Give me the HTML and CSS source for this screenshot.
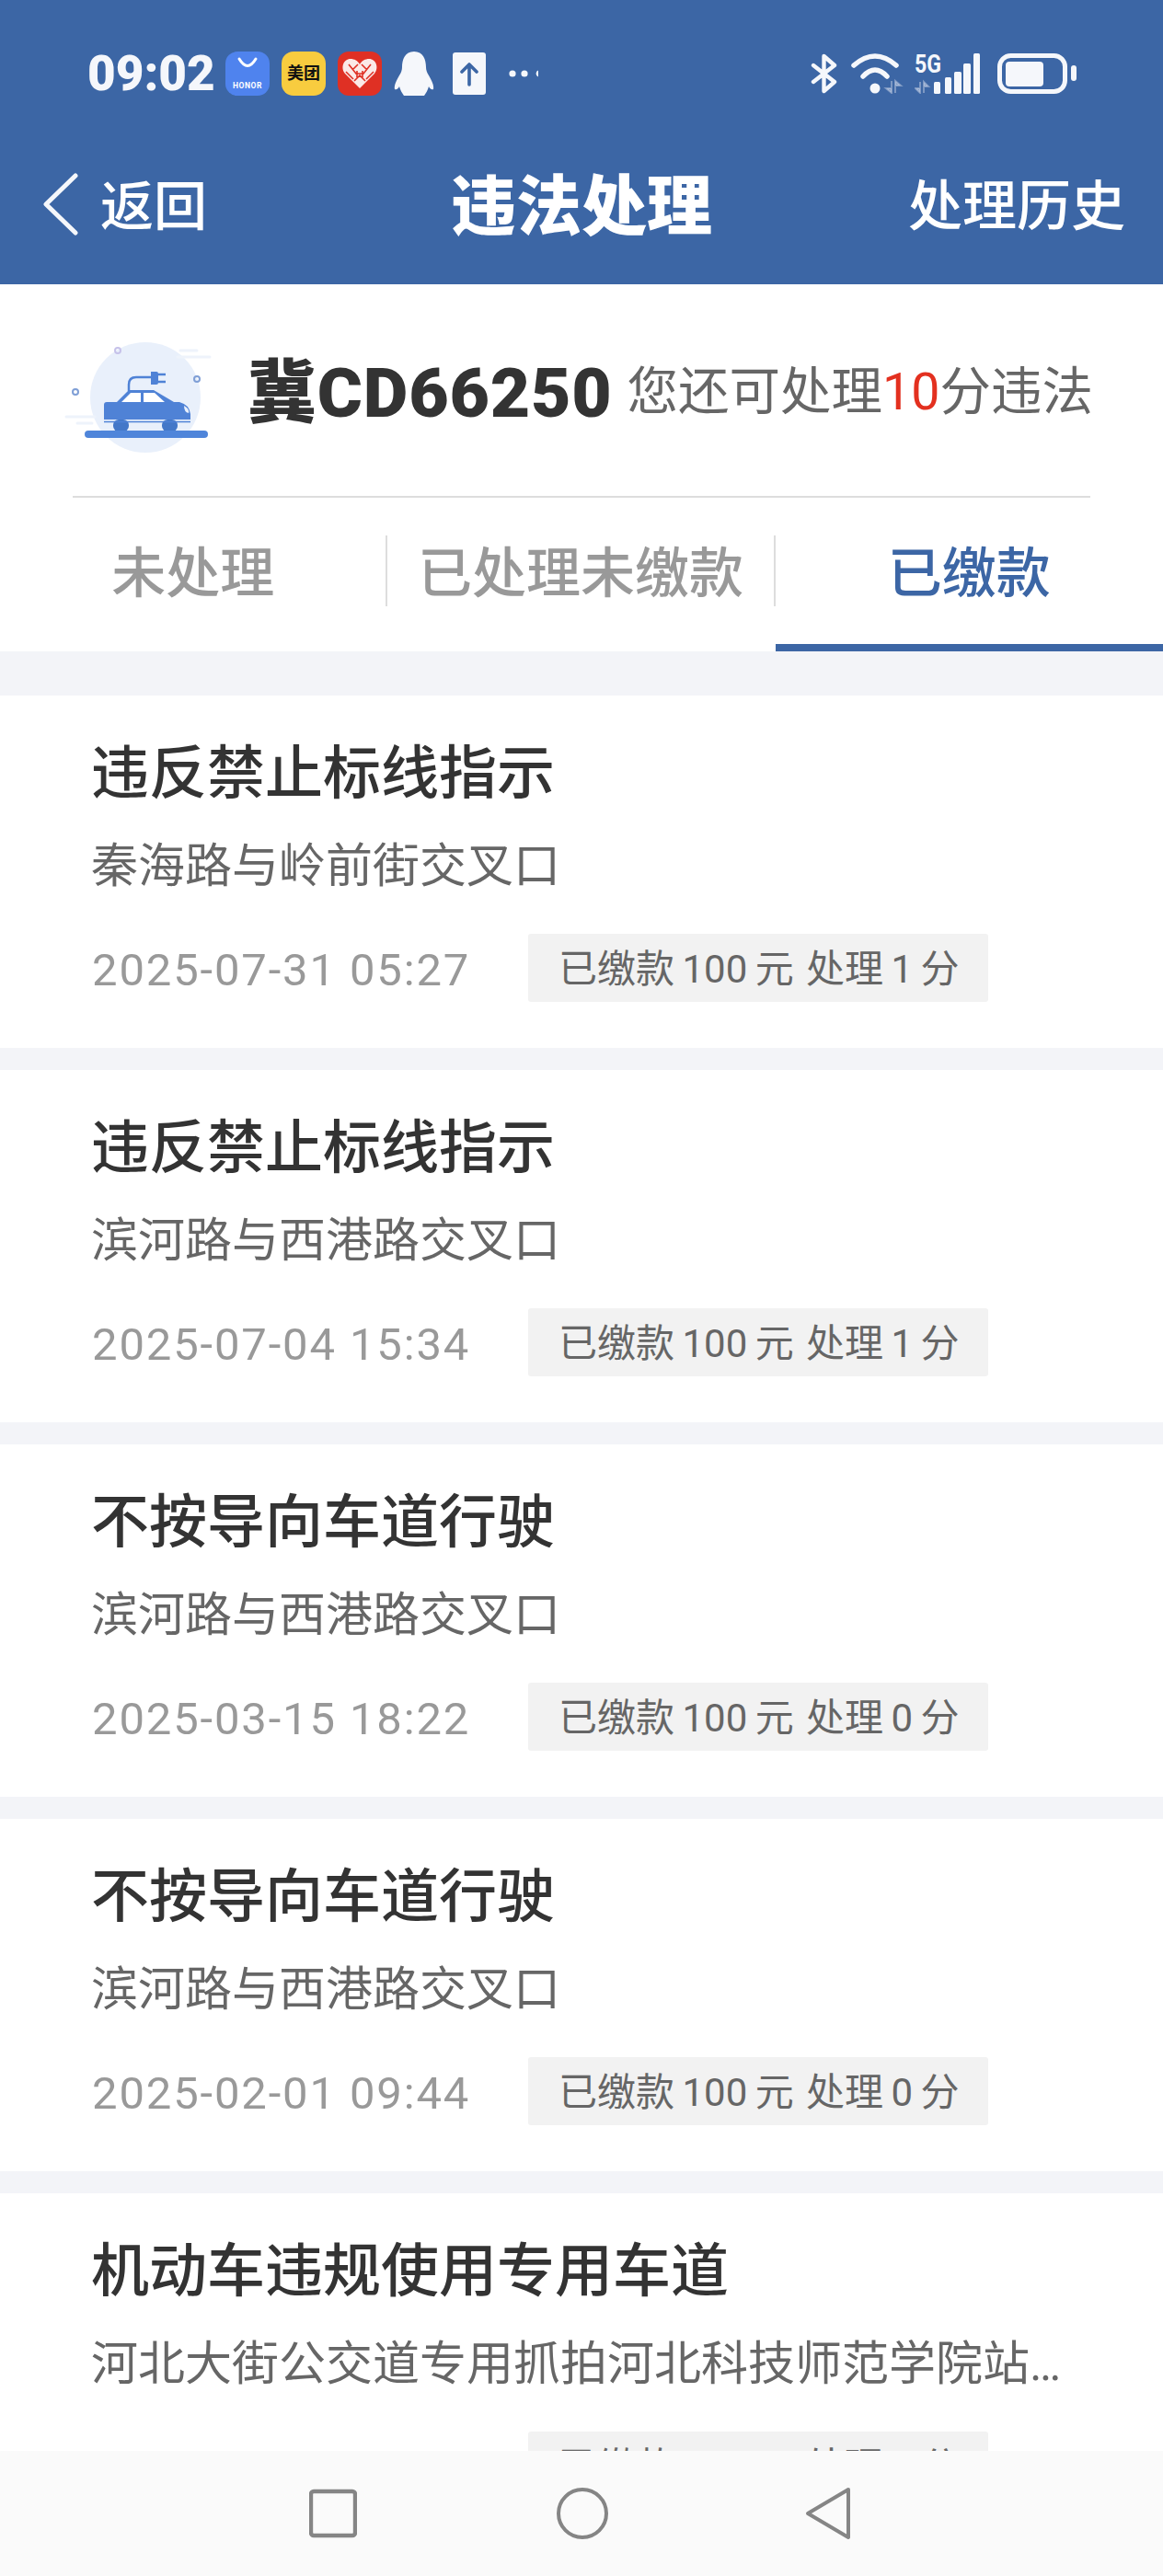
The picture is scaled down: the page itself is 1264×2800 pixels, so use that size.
FILE: index.html
```html
<!DOCTYPE html>
<html lang="zh-CN">
<head>
<meta charset="utf-8">
<title>违法处理</title>
<link rel="stylesheet" href="styles.css">
</head>
<body>
<div class="app">
  <header class="topbar">
    <div class="status">
      <div class="status-left">
        <span class="clock">09:02</span>
        <svg class="ic48" viewBox="0 0 48 48"><rect width="48" height="48" rx="13" fill="#4f83ee"/><path d="M15 8 Q24 23 33 8" fill="none" stroke="#fff" stroke-width="3" stroke-linecap="round"/><text x="24" y="40" text-anchor="middle" class="honor">HONOR</text></svg>
        <span class="meituan">美团</span>
        <svg class="ic48" viewBox="0 0 48 48"><rect width="48" height="48" rx="12" fill="#df3024"/><path d="M24 40 L8 24 C3 18 6 8 14 8 C18 8 22 10 24 14 C26 10 30 8 34 8 C42 8 45 18 40 24 Z" fill="#fbe9e7"/><path d="M12 14 L20 24 M9 22 L17 30 M22 14 L16 20 M36 14 L28 24 M39 22 L31 30 M26 14 L32 20 M18 32 L24 26 L30 32 M21 21 V28 M27 21 V28 M19 24 H29" fill="none" stroke="#df3024" stroke-width="1.6"/></svg>
        <svg class="qq" viewBox="0 0 44 48"><path d="M22 0 C12 0 9 9 9 17 C9 20 8 23 6 26 C3 31 0 37 1 41 C3 42 5 40 6 38 C7 42 9 45 11 48 H33 C35 45 37 42 38 38 C39 40 41 42 43 41 C44 37 41 31 38 26 C36 23 35 20 35 17 C35 9 32 0 22 0 Z" fill="#f5f7fb"/></svg>
        <svg class="upload" viewBox="0 0 36 46"><rect width="36" height="46" rx="3" fill="#f5f7fb"/><path d="M18 35 V13 M10 21 L18 13 L26 21" fill="none" stroke="#3c66a5" stroke-width="3.6" stroke-linecap="round" stroke-linejoin="round"/></svg>
        <svg class="dots" viewBox="0 0 32 10"><circle cx="4" cy="5" r="3.6"/><circle cx="17" cy="5" r="3.6"/><path d="M32 1.6 A3.6 3.6 0 0 0 32 8.4 Z"/></svg>
      </div>
      <div class="status-right">
        <svg class="bt" viewBox="0 0 29 44"><path d="M3 13 L26 31 L14.5 41 V3 L26 13 L3 31" fill="none" stroke="#f5f7fb" stroke-width="4.4" stroke-linejoin="round" stroke-linecap="round"/></svg>
        <svg class="wifi" viewBox="0 0 58 44"><circle cx="27" cy="38" r="5.500" fill="#f5f7fb"/><path d="M4 13 Q27 -7 50 13 M14 25 Q27 11 40 25" fill="none" stroke="#f5f7fb" stroke-width="5.500" stroke-linecap="round"/><path d="M45 30 V43 L39 38 H45 M49 43 V30 L55 35 H49" fill="#f5f7fb" fill-opacity=".35" stroke="#f5f7fb" stroke-opacity=".35" stroke-width="2"/></svg>
        <svg class="net" viewBox="0 0 72 44"><text x="0" y="21" textLength="29" lengthAdjust="spacingAndGlyphs" class="fiveg">5G</text><path d="M6 31 V43 L1 38 H6 M10 43 V31 L15 36 H10" fill="#f5f7fb" fill-opacity=".35" stroke="#f5f7fb" stroke-opacity=".35" stroke-width="2"/><rect x="21" y="31" width="7" height="13" rx="1.5" fill="#f5f7fb"/><rect x="33" y="26" width="7" height="18" rx="1.5" fill="#f5f7fb"/><rect x="43" y="20" width="8" height="24" rx="1.5" fill="#f5f7fb"/><rect x="53" y="11" width="8" height="33" rx="1.5" fill="#f5f7fb"/><rect x="64" y="0" width="7" height="44" rx="1.5" fill="#f5f7fb"/></svg>
        <svg class="batt" viewBox="0 0 88 44"><rect x="3.500" y="2.500" width="71" height="39" rx="12" fill="none" stroke="#f5f7fb" stroke-width="5"/><rect x="10" y="9" width="41" height="27" rx="4" fill="#f5f7fb"/><rect x="81" y="13" width="6" height="17" rx="3" fill="#f5f7fb"/></svg>
      </div>
    </div>
    <nav class="navbar">
      <div class="back">
        <svg class="chev" viewBox="0 0 40 68"><path d="M36 3 L4 34 L36 65" fill="none" stroke="#f5f7fb" stroke-width="5" stroke-linecap="round" stroke-linejoin="round"/></svg>
        <span>返回</span>
      </div>
      <h1 class="page-title">违法处理</h1>
      <div class="history">处理历史</div>
    </nav>
  </header>

  <section class="summary">
    <div class="plate-row">
      <svg class="car" viewBox="60 340 200 160">
        <circle cx="158" cy="432" r="60" fill="#e9f0fb"/>
        <path d="M193 388 H228 M72 453 H103 M196 381 H214 M84 460 H100" stroke="#eef3fb" stroke-width="3" stroke-linecap="round"/>
        <circle cx="128" cy="381" r="3" fill="none" stroke="#c6c2ea" stroke-width="2"/>
        <circle cx="214" cy="412" r="3" fill="none" stroke="#7f9fd6" stroke-width="2"/>
        <circle cx="82" cy="426" r="3" fill="none" stroke="#7f9fd6" stroke-width="2"/>
        <path d="M140 425 V418 Q140 410 148 410 H164" fill="none" stroke="#4f82d6" stroke-width="2.500"/>
        <path d="M164 404 H170 Q172 404 172 406 V416 Q172 418 170 418 H164 Z" fill="#4f82d6"/>
        <path d="M172 407 H180 M172 415 H180" stroke="#4f82d6" stroke-width="2.500"/>
        <rect x="123" y="456" width="17" height="13" rx="6" fill="#4478c8"/>
        <rect x="176" y="456" width="17" height="13" rx="6" fill="#4478c8"/>
        <path d="M127 437 L140 424 H167 L189 437 Z" fill="#4f82d6"/>
        <path d="M132 437 L142 427 H153 V437 Z M156 427 H168 L179 437 H156 Z" fill="#fff"/>
        <path d="M116 437 H195 Q206 440 207 450 V456 H113 V440 Q113 437 116 437 Z" fill="#4f82d6"/>
        <path d="M113 458.500 H207" stroke="#4f82d6" stroke-width="1.500"/>
        <path d="M200 441 Q206 444 205 449 Q200 448 200 441 Z" fill="#e9f0fb"/>
        <rect x="92" y="468" width="134" height="8" rx="4" fill="#4f85da"/>
      </svg>
      <span class="plate">冀CD66250</span>
      <span class="quota">您还可处理<em class="points">10</em>分违法</span>
    </div>
    <div class="tabs">
      <div class="tab"><div class="tab-in">未处理</div></div>
      <div class="tab"><div class="tab-in">已处理未缴款</div></div>
      <div class="tab active"><div class="tab-in">已缴款</div></div>
    </div>
  </section>

  <main class="list">
    <article class="card">
      <h2 class="card-title">违反禁止标线指示</h2>
      <p class="addr">秦海路与岭前街交叉口</p>
      <div class="meta"><time class="date">2025-07-31 05:27</time><span class="tag">已缴款 100 元 <span class="tag-score">处理 1 分</span></span></div>
    </article>
    <article class="card">
      <h2 class="card-title">违反禁止标线指示</h2>
      <p class="addr">滨河路与西港路交叉口</p>
      <div class="meta"><time class="date">2025-07-04 15:34</time><span class="tag">已缴款 100 元 <span class="tag-score">处理 1 分</span></span></div>
    </article>
    <article class="card">
      <h2 class="card-title">不按导向车道行驶</h2>
      <p class="addr">滨河路与西港路交叉口</p>
      <div class="meta"><time class="date">2025-03-15 18:22</time><span class="tag">已缴款 100 元 <span class="tag-score">处理 0 分</span></span></div>
    </article>
    <article class="card">
      <h2 class="card-title">不按导向车道行驶</h2>
      <p class="addr">滨河路与西港路交叉口</p>
      <div class="meta"><time class="date">2025-02-01 09:44</time><span class="tag">已缴款 100 元 <span class="tag-score">处理 0 分</span></span></div>
    </article>
    <article class="card">
      <h2 class="card-title">机动车违规使用专用车道</h2>
      <p class="addr">河北大街公交道专用抓拍河北科技师范学院站…</p>
      <div class="meta"><time class="date">2025-01-08 11:19</time><span class="tag">已缴款 100 元 <span class="tag-score">处理 0 分</span></span></div>
    </article>
  </main>

  <footer class="sysnav">
    <svg class="nav-sq" viewBox="0 0 52 54"><rect x="2" y="3" width="48" height="48" rx="3" fill="none" stroke="#858585" stroke-width="4.400"/></svg>
    <svg class="nav-ci" viewBox="0 0 56 56"><circle cx="28" cy="28" r="26" fill="none" stroke="#858585" stroke-width="4"/></svg>
    <svg class="nav-tr" viewBox="0 0 50 58"><path d="M47 3 L3 29 L47 55 Z" fill="none" stroke="#858585" stroke-width="4" stroke-linejoin="round"/></svg>
  </footer>
</div>
</body>
</html>
```

FILE: styles.css
```css
* { box-sizing: border-box; }
html, body { margin: 0; padding: 0; }
body {
  background: #f3f4f8;
  font-family: Roboto, "Noto Sans CJK SC", sans-serif;
}
.app {
  position: relative;
  width: 1264px;
  height: 2800px;
  overflow: hidden;
  background: #f3f4f8;
}

/* top */
.topbar { height: 309px; background: #3c66a5; color: #fff; }
.status {
  height: 160px;
  display: flex;
  align-items: center;
  justify-content: space-between;
  padding: 0 93px 0 95px;
}
.status-left { display: flex; align-items: center; }
.status-right { display: flex; align-items: center; }
.clock {
  width: 135px;
  margin-right: 15px;
  font-size: 53px;
  line-height: 48px;
  font-weight: 900;
  color: #f5f7fb;
  white-space: nowrap;
}
.ic48 { width: 48px; height: 48px; display: block; margin-right: 13px; }
.honor { font: 700 8.500px Roboto, sans-serif; fill: #fff; letter-spacing: .6px; }
.meituan {
  width: 48px;
  height: 48px;
  margin-right: 13px;
  border-radius: 13px;
  background: #f8cc3f;
  color: #111;
  font-size: 18px;
  line-height: 48px;
  font-weight: 700;
  text-align: center;
  white-space: nowrap;
}
.qq { width: 44px; height: 48px; display: block; margin-right: 20px; }
.upload { width: 36px; height: 46px; display: block; margin-right: 25px; }
.dots { width: 32px; height: 10px; display: block; fill: #f5f7fb; }
.bt { width: 29px; height: 44px; display: block; margin-right: 14px; }
.wifi { width: 58px; height: 44px; display: block; margin-right: 12px; }
.net { width: 72px; height: 44px; display: block; margin-right: 17px; }
.batt { width: 88px; height: 44px; display: block; }
.fiveg { font: 700 28px Roboto, sans-serif; fill: #f5f7fb; }

.navbar {
  height: 130px;
  display: grid;
  grid-template-columns: 1fr auto 1fr;
  align-items: center;
  padding: 0 41px 0 46px;
}
.back { display: flex; align-items: center; gap: 23px; font-size: 58px; line-height: 70px; font-weight: 500; }
.chev { width: 40px; height: 68px; display: block; margin-bottom: 6px; }
.page-title { margin: 0 5px 0 0; font-size: 71px; line-height: 84px; font-weight: 900; }
.history { justify-self: end; font-size: 59px; line-height: 70px; font-weight: 500; }

/* plate + tabs */
.summary { background: #fff; height: 399px; }
.plate-row {
  height: 232px;
  margin: 0 79px;
  padding-top: 6px;
  border-bottom: 2px solid #ddd;
  display: flex;
  align-items: center;
}
.car { width: 200px; height: 160px; display: block; flex: none; margin: 0 9px 14px -19px; }
.plate {
  font-size: 75px;
  line-height: 90px;
  letter-spacing: .8px;
  font-weight: 900;
  color: #333;
  white-space: nowrap;
}
.quota {
  margin-left: 16px;
  font-size: 55.500px;
  line-height: 70px;
  color: #666;
  white-space: nowrap;
}
.points { font-style: normal; color: #e3301f; }
.tabs { display: flex; height: 167px; }
.tab {
  flex: 1 1 0;
  height: 167px;
  display: flex;
  align-items: center;
  border-bottom: 8px solid transparent;
  font-size: 59px;
  font-weight: 500;
  color: #999;
}
.tab-in {
  width: 100%;
  height: 77px;
  padding-top: 6px;
  line-height: 71px;
  text-align: center;
  border-right: 2px solid #ddd;
}
.tab.active { color: #3c66a5; border-bottom-color: #3c66a5; }
.tab.active .tab-in { border-right: 0; }

/* list */
.list {
  display: flex;
  flex-direction: column;
  gap: 24px;
  padding-top: 48px;
}
.card {
  height: 383px;
  padding: 42px 100px 0 99px;
  background: #fff;
}
.card-title {
  margin: 0;
  font-size: 63px;
  line-height: 86px;
  font-weight: 500;
  color: #333;
  white-space: nowrap;
}
.addr {
  margin: 23px 0 0;
  font-size: 51px;
  line-height: 70px;
  color: #666;
  white-space: nowrap;
}
.meta { display: flex; align-items: flex-start; margin-top: 38px; }
.date {
  width: 475px;
  height: 74px;
  padding-left: 1px;
  font-size: 49px;
  line-height: 80px;
  letter-spacing: 1.850px;
  color: #999;
  white-space: nowrap;
}
.tag {
  width: 500px;
  height: 74px;
  line-height: 78px;
  padding-left: 33px;
  border-radius: 3px;
  background: #f2f2f2;
  font-size: 42px;
  word-spacing: -2px;
  color: #666;
  white-space: nowrap;
}
.tag-score { margin-left: 5px; }

/* system nav */
.sysnav {
  position: absolute;
  left: 0;
  right: 0;
  bottom: 0;
  height: 136px;
  background: #fafafa;
  display: flex;
  align-items: center;
  padding-left: 336px;
}
.nav-sq { width: 52px; height: 54px; display: block; margin-right: 217px; }
.nav-ci { width: 56px; height: 56px; display: block; margin-right: 214px; }
.nav-tr { width: 50px; height: 58px; display: block; }
```
